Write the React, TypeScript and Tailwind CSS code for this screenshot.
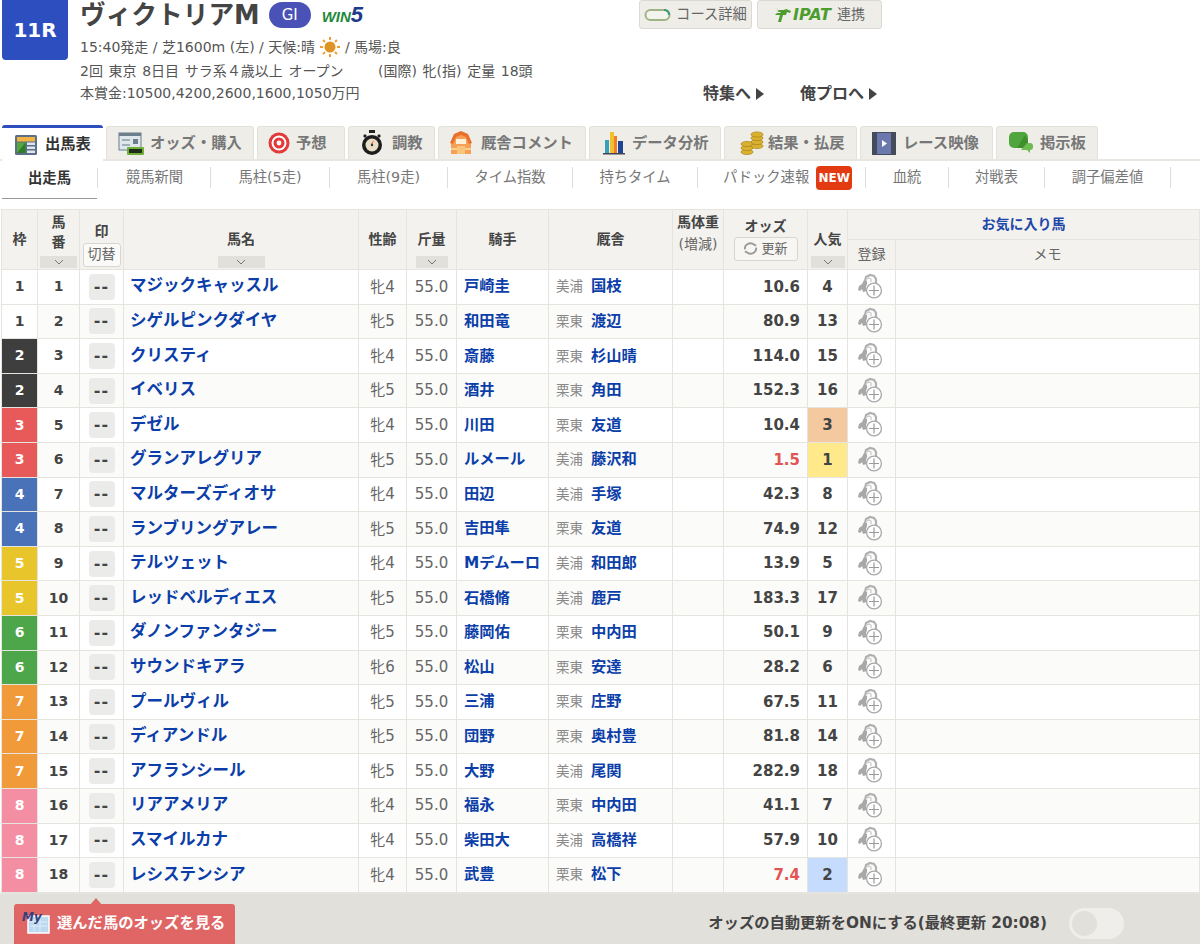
import React from "react";

type Row = [number, number, string, string, string, string, string, string, string];
const rows: Row[] = [
  [1, 1, "マジックキャッスル", "牝4", "戸崎圭", "美浦", "国枝", "10.6", "4"],
  [1, 2, "シゲルピンクダイヤ", "牝5", "和田竜", "栗東", "渡辺", "80.9", "13"],
  [2, 3, "クリスティ", "牝4", "斎藤", "栗東", "杉山晴", "114.0", "15"],
  [2, 4, "イベリス", "牝5", "酒井", "栗東", "角田", "152.3", "16"],
  [3, 5, "デゼル", "牝4", "川田", "栗東", "友道", "10.4", "3"],
  [3, 6, "グランアレグリア", "牝5", "ルメール", "美浦", "藤沢和", "1.5", "1"],
  [4, 7, "マルターズディオサ", "牝4", "田辺", "美浦", "手塚", "42.3", "8"],
  [4, 8, "ランブリングアレー", "牝5", "吉田隼", "栗東", "友道", "74.9", "12"],
  [5, 9, "テルツェット", "牝4", "Mデムーロ", "美浦", "和田郎", "13.9", "5"],
  [5, 10, "レッドベルディエス", "牝5", "石橋脩", "美浦", "鹿戸", "183.3", "17"],
  [6, 11, "ダノンファンタジー", "牝5", "藤岡佑", "栗東", "中内田", "50.1", "9"],
  [6, 12, "サウンドキアラ", "牝6", "松山", "栗東", "安達", "28.2", "6"],
  [7, 13, "プールヴィル", "牝5", "三浦", "栗東", "庄野", "67.5", "11"],
  [7, 14, "ディアンドル", "牝5", "団野", "栗東", "奥村豊", "81.8", "14"],
  [7, 15, "アフランシール", "牝5", "大野", "美浦", "尾関", "282.9", "18"],
  [8, 16, "リアアメリア", "牝4", "福永", "栗東", "中内田", "41.1", "7"],
  [8, 17, "スマイルカナ", "牝4", "柴田大", "美浦", "高橋祥", "57.9", "10"],
  [8, 18, "レシステンシア", "牝4", "武豊", "栗東", "松下", "7.4", "2"],
];

const wakuClass: Record<number, string> = {
  1: "bg-white text-[#444]",
  2: "bg-[#3e3e3e] text-white",
  3: "bg-[#e85a5a] text-white",
  4: "bg-[#4a72b8] text-white",
  5: "bg-[#e9c52c] text-white",
  6: "bg-[#4ea64a] text-white",
  7: "bg-[#f09a3a] text-white",
  8: "bg-[#f48fa3] text-white",
};

const Chev = () => (
  <svg width="10" height="6" viewBox="0 0 10 6" className="block">
    <path d="M1 1l4 4 4-4" fill="none" stroke="#777" strokeWidth="1" />
  </svg>
);

const Sort = ({ w }: { w: string }) => (
  <div className={`mx-auto flex h-[12px] items-center justify-center bg-[#e2e0da] ${w}`}>
    <Chev />
  </div>
);

const HorseAdd = () => (
  <svg width="30" height="28" viewBox="0 0 30 28" className="block">
    <path d="M1 17l1-4 3-2 2-4 3 1 0 3-1 3 1 4-4 1-1-3-2 2z" fill="#a8a8a8" />
    <path d="M8 8l1-4 4-2 4 1 2 3 0 5-2 2" fill="none" stroke="#b0b0b0" strokeWidth="2.2" />
    <path d="M10 6l2-1 2 1 0 3" fill="none" stroke="#c8c8c8" strokeWidth="1.2" />
    <circle cx="17" cy="17.5" r="7.4" fill="#fff" stroke="#a8a8a8" strokeWidth="1.3" />
    <path d="M17 12.5v10M12 17.5h10" stroke="#9a9a9a" strokeWidth="1.2" />
  </svg>
);

const tabIcons: Record<string, React.ReactNode> = {
  table: (
    <svg width="24" height="22" viewBox="0 0 24 22">
      <rect x="1" y="1" width="22" height="20" rx="1.5" fill="#5c6f86" />
      <rect x="3" y="3" width="18" height="4.5" fill="#f2b544" />
      <rect x="3" y="8.5" width="8.5" height="10.5" fill="#52a83f" />
      <path d="M3 19l8.5-10.5V19z" fill="#2f7d2c" />
      <rect x="13" y="8.5" width="8" height="2.5" fill="#dde6f1" />
      <rect x="13" y="12.5" width="8" height="2.5" fill="#dde6f1" />
      <rect x="13" y="16.5" width="8" height="2.5" fill="#dde6f1" />
    </svg>
  ),
  odds: (
    <svg width="26" height="23" viewBox="0 0 26 23">
      <rect x="1" y="1" width="22" height="17" fill="#dfe7ec" stroke="#6b7f8c" />
      <rect x="1" y="1" width="22" height="3" fill="#6b7f8c" />
      <rect x="4" y="7" width="8" height="2" fill="#9fb0ba" />
      <rect x="15" y="7" width="5" height="5" fill="#6b7f8c" />
      <rect x="4" y="12" width="8" height="2" fill="#9fb0ba" />
      <rect x="9" y="15" width="17" height="8" rx="1" fill="#6fae3a" />
      <rect x="11" y="17" width="13" height="4" fill="#1f2d16" />
    </svg>
  ),
  target: (
    <svg width="22" height="24" viewBox="0 0 22 24">
      <circle cx="11" cy="12" r="10.5" fill="#e23a3a" />
      <circle cx="11" cy="12" r="7.5" fill="#fff" />
      <circle cx="11" cy="12" r="5.5" fill="#e23a3a" />
      <circle cx="11" cy="12" r="2.4" fill="#fff" />
    </svg>
  ),
  watch: (
    <svg width="24" height="26" viewBox="0 0 24 26">
      <rect x="9" y="0" width="6" height="3" fill="#222" />
      <path d="M3 6l2-2 2 2-2 2zM21 6l-2-2-2 2 2 2z" fill="#222" />
      <circle cx="12" cy="15" r="10" fill="#1d1d1d" />
      <circle cx="12" cy="15" r="6.5" fill="#e9dfc8" />
      <path d="M12 15l2-5-3 4z" fill="#d9482c" />
      <circle cx="12" cy="15" r="1.2" fill="#333" />
    </svg>
  ),
  barn: (
    <svg width="22" height="24" viewBox="0 0 22 24">
      <path d="M1 23V11l4-7 6-3 6 3 4 7v12z" fill="#f6a056" />
      <path d="M0 12l4-9 7-3 7 3 4 9-3 1-3-7-5-2-5 2-3 7z" fill="#e8702c" />
      <rect x="6" y="8" width="10" height="5" fill="#fff1da" />
      <rect x="1" y="17" width="20" height="2" fill="#fbcf8f" />
      <rect x="7" y="15" width="8" height="8" fill="#f9c37a" />
    </svg>
  ),
  chart: (
    <svg width="22" height="24" viewBox="0 0 22 24">
      <rect x="2" y="9" width="4" height="13" fill="#3aa0b8" />
      <rect x="7" y="1" width="4" height="21" fill="#f2c12e" />
      <rect x="11" y="5" width="3" height="17" fill="#ef7f2c" />
      <rect x="15" y="10" width="5" height="12" fill="#1f4494" />
      <rect x="0" y="22" width="22" height="1.5" fill="#445" />
    </svg>
  ),
  coins: (
    <svg width="24" height="24" viewBox="0 0 24 24">
      <g fill="#d9b02f" stroke="#a98414" strokeWidth=".7">
        <ellipse cx="7" cy="21" rx="6" ry="2.6" />
        <ellipse cx="7" cy="17" rx="6" ry="2.6" />
        <ellipse cx="7" cy="13" rx="6" ry="2.6" />
        <ellipse cx="17" cy="15" rx="6" ry="2.6" />
        <ellipse cx="17" cy="11" rx="6" ry="2.6" />
        <ellipse cx="17" cy="7" rx="6" ry="2.6" />
        <ellipse cx="17" cy="3.5" rx="6" ry="2.6" />
      </g>
    </svg>
  ),
  film: (
    <svg width="24" height="23" viewBox="0 0 24 23">
      <rect x="0" y="0" width="24" height="23" fill="#444c5c" />
      <rect x="5" y="1" width="14" height="21" fill="#6a78ae" />
      <path d="M10 8l5 3.5-5 3.5z" fill="#fff" />
    </svg>
  ),
  chat: (
    <svg width="24" height="22" viewBox="0 0 24 22">
      <rect x="0" y="0" width="19" height="16" rx="5" fill="#4ea63c" />
      <path d="M8 16L16 3l3 6v2a5 5 0 01-5 5z" fill="#3f8f2f" />
      <path d="M18 11h3a3 3 0 013 3v1a3 3 0 01-3 3v3l-3-3h-6z" fill="#6cbc52" />
    </svg>
  ),
};

const tabs: [string, string, string][] = [
  ["オッズ・購入", "odds", "w-[148px] pl-[11px] gap-[6px]"],
  ["予想", "target", "w-[88px] pl-[10px] gap-[6px]"],
  ["調教", "watch", "w-[87px] pl-[11px] gap-[8px]"],
  ["厩舎コメント", "barn", "w-[148px] pl-[11px] gap-[9px]"],
  ["データ分析", "chart", "w-[132px] pl-[13px] gap-[7px]"],
  ["結果・払戻", "coins", "w-[133px] pl-[15px] gap-[4px]"],
  ["レース映像", "film", "w-[133px] pl-[11px] gap-[7px]"],
  ["掲示板", "chat", "w-[102px] pl-[12px] gap-[7px]"],
];

const subnav: [string, string][] = [
  ["競馬新聞", "w-[112px]"],
  ["馬柱(5走)", "w-[119px]"],
  ["馬柱(9走)", "w-[118px]"],
  ["タイム指数", "w-[125px]"],
  ["持ちタイム", "w-[125px]"],
];
const subnav2: [string, string][] = [
  ["血統", "w-[83px]"],
  ["対戦表", "w-[96px]"],
  ["調子偏差値", "w-[126px]"],
];

const th = "border border-[#e6e4de] bg-[#f3f2ee] font-bold text-[14px] p-0 align-middle";
const thDark = `${th} text-[#444]`;
const thLight = `${th} font-normal text-[#666]`;
const td = "border border-[#e6e4de] p-0 align-middle";

export default function App() {
  return (
    <div className="relative flex h-[944px] w-[1200px] flex-col overflow-hidden bg-white font-['DejaVu_Sans','Noto_Sans_CJK_JP',sans-serif] text-[#555]">
      {/* race header */}
      <div className="flex h-[125px] shrink-0">
        <div className="ml-[2px] flex h-[60px] w-[66px] shrink-0 items-center justify-center rounded-b-[4px] bg-[#2c4ebf] text-[20px] font-bold text-white">
          11R
        </div>
        <div className="ml-[12px] flex-1">
          <div className="flex h-[30px] items-center">
            <span className="text-[25.7px] font-bold leading-[30px] text-[#444]">ヴィクトリアM</span>
            <span className="ml-[9px] flex h-[26px] w-[42px] items-center justify-center rounded-full bg-[#4a52b8] text-[15px] text-white">
              GI
            </span>
            <span className="ml-[11px] flex items-baseline font-['Liberation_Sans',sans-serif] font-bold italic leading-none">
              <span className="text-[15px] text-[#1f8a3c]">WIN</span>
              <span className="text-[22px] text-[#1e3a8a]">5</span>
            </span>
          </div>
          <div className="mt-[5px] flex h-[24px] items-center text-[14px]">
            15:40発走 / 芝1600m (左) / 天候:晴
            <svg width="22" height="22" viewBox="0 0 22 22" className="mx-[4px]">
              <g stroke="#f0a030" strokeWidth="2">
                <path d="M11 1v3M11 18v3M1 11h3M18 11h3M4 4l2 2M16 16l2 2M4 18l2-2M16 6l2-2" />
              </g>
              <circle cx="11" cy="11" r="5.5" fill="#dd9422" />
            </svg>
            / 馬場:良
          </div>
          <div className="mt-[1px] flex h-[23px] whitespace-pre text-[14px] leading-[23px] [word-spacing:1.2px]">
            <span className="w-[298px]">2回 東京 8日目 サラ系４歳以上 オープン</span>
            <span>(国際) 牝(指) 定量 18頭</span>
          </div>
          <div className="-mt-[1px] h-[23px] text-[14px] leading-[23px]">本賞金:10500,4200,2600,1600,1050万円</div>
        </div>
        <div className="w-[561px] shrink-0">
          <div className="flex gap-[5px]">
            <div className="flex h-[29px] w-[113px] items-center justify-center gap-[4px] rounded-[3px] border border-[#dcd9d2] bg-[#eeede8] text-[14.3px] text-[#666]">
              <svg width="28" height="14" viewBox="0 0 28 14">
                <rect x="1.5" y="2" width="24" height="10" rx="5" fill="#f4f4ee" stroke="#9fb486" strokeWidth="2" />
                <path d="M20 2h1a5 5 0 014 5" fill="none" stroke="#3b9b7a" strokeWidth="2" />
              </svg>
              コース詳細
            </div>
            <div className="flex h-[29px] w-[125px] items-center justify-center gap-[6px] rounded-[3px] border border-[#dcd9d2] bg-[#eeede8] text-[14px] text-[#666]">
              <span className="flex items-center text-[16px] font-bold italic leading-none text-[#4c9c2e]">
                <svg width="18" height="15" viewBox="0 0 18 15" className="mr-[1px]">
                  <path d="M1 1l3 2h6l2-1 5 2-1 2-3-1-1 3h-3l-2 7H4l2-7H1l2-2h3l1-1H3l2-1z" fill="#4c9c2e" />
                </svg>
                IPAT
              </span>
              <span>連携</span>
            </div>
          </div>
          <div className="mt-[51px] flex pl-[64px] text-[16px] font-bold leading-[28px] text-[#444]">
            <span className="flex w-[97px] items-center">
              特集へ
              <svg width="10" height="12" viewBox="0 0 10 12" className="ml-[4px]">
                <path d="M1 0l8 6-8 6z" fill="#444" />
              </svg>
            </span>
            <span className="flex items-center">
              俺プロへ
              <svg width="10" height="12" viewBox="0 0 10 12" className="ml-[4px]">
                <path d="M1 0l8 6-8 6z" fill="#444" />
              </svg>
            </span>
          </div>
        </div>
      </div>

      {/* tabs */}
      <div className="flex h-[36px] shrink-0 items-end gap-[3px] border-b-2 border-[#e8e6e0] pl-[2px]">
        <div className="-mb-[2px] flex h-[36px] w-[101px] items-center gap-[7px] rounded-t-[3px] border-t-[3px] border-[#2c4ebf] bg-white pl-[12px] text-[15.3px] font-bold text-[#333]">
          {tabIcons.table}
          出馬表
        </div>
        {tabs.map(([label, icon, cls]) => (
          <div
            key={label}
            className={`flex h-[33px] items-center rounded-t-[3px] border border-b-0 border-[#e3e1da] bg-[#eeede8] text-[15.3px] font-bold text-[#777] ${cls}`}
          >
            {tabIcons[icon]}
            {label}
          </div>
        ))}
      </div>

      {/* sub navigation */}
      <div className="flex h-[37px] shrink-0 items-start pl-[2px] pt-[6px] text-[14.3px] text-[#777]">
        <div className="flex h-[32px] w-[95px] items-start justify-center border-b border-[#999] pt-[1px] font-bold text-[#333]">
          <span className="leading-[20px]">出走馬</span>
        </div>
        <div className="mr-[1px] mt-[1px] h-[20px] w-[1px] bg-[#ddd]" />
        {subnav.map(([t, w]) => (
          <div key={t} className={`flex h-[21px] items-center justify-center border-r border-[#ddd] ${w}`}>
            {t}
          </div>
        ))}
        <div className="flex h-[21px] w-[168px] items-center gap-[7px] border-r border-[#ddd] pl-[25px]">
          パドック速報
          <span className="flex h-[24px] w-[36px] items-center justify-center rounded-[4px] bg-[#e23b12] text-[12px] font-bold text-white">
            NEW
          </span>
        </div>
        {subnav2.map(([t, w]) => (
          <div key={t} className={`flex h-[21px] items-center justify-center border-r border-[#ddd] ${w}`}>
            {t}
          </div>
        ))}
      </div>

      {/* table */}
      <div className="mt-[11px] pl-[1px]">
        <table className="w-[1199px] table-fixed border-collapse">
          <colgroup>
            <col className="w-[36px]" />
            <col className="w-[42px]" />
            <col className="w-[44px]" />
            <col className="w-[235px]" />
            <col className="w-[48px]" />
            <col className="w-[50px]" />
            <col className="w-[92px]" />
            <col className="w-[124px]" />
            <col className="w-[51px]" />
            <col className="w-[84px]" />
            <col className="w-[40px]" />
            <col className="w-[48px]" />
            <col />
          </colgroup>
          <thead>
            <tr className="h-[30px]">
              <th rowSpan={2} className={thDark}>枠</th>
              <th rowSpan={2} className={thDark}>
                <div className="mb-[4px] leading-[20px]">馬<br />番</div>
                <Sort w="w-[37px]" />
              </th>
              <th rowSpan={2} className={thDark}>
                <div className="mb-[2px] mt-[8px] leading-[20px]">印</div>
                <div className="mx-auto flex h-[24px] w-[38px] items-center justify-center rounded-[3px] border border-[#d8d6d0] bg-[#fafaf8] text-[14px] font-normal text-[#666]">
                  切替
                </div>
              </th>
              <th rowSpan={2} className={thDark}>
                <div className="mb-[5px] mt-[15px] leading-[24px]">馬名</div>
                <Sort w="w-[47px]" />
              </th>
              <th rowSpan={2} className={thDark}>性齢</th>
              <th rowSpan={2} className={thDark}>
                <div className="mb-[5px] mt-[15px] leading-[24px]">斤量</div>
                <Sort w="w-[32px]" />
              </th>
              <th rowSpan={2} className={thDark}>騎手</th>
              <th rowSpan={2} className={thDark}>厩舎</th>
              <th rowSpan={2} className={`${thDark} align-top`}>
                <div className="leading-[24px]">馬体重</div>
                <div className="font-normal leading-[20px] text-[#666]">(増減)</div>
              </th>
              <th rowSpan={2} className={thDark}>
                <div className="-mt-[4px] leading-[22px]">オッズ</div>
                <div className="mx-auto flex h-[24px] w-[64px] items-center justify-center gap-[3px] rounded-[3px] border border-[#d8d6d0] bg-[#f7f6f3] text-[13px] font-normal text-[#666]">
                  <svg width="15" height="15" viewBox="0 0 16 16">
                    <path d="M2 9a6 6 0 0110-5l2 1M14 7a6 6 0 01-10 5l-2-1" fill="none" stroke="#999" strokeWidth="2" />
                  </svg>
                  更新
                </div>
              </th>
              <th rowSpan={2} className={thDark}>
                <div className="mb-[5px] mt-[15px] leading-[24px]">人気</div>
                <Sort w="w-[34px]" />
              </th>
              <th colSpan={2} className={`${th} text-[#1e48a8]`}>お気に入り馬</th>
            </tr>
            <tr className="h-[30px]">
              <th className={thLight}>登録</th>
              <th className={thLight}>メモ</th>
            </tr>
          </thead>
          <tbody>
            {rows.map((r, i) => (
              <tr key={r[1]} className={`h-[34.6px] ${i % 2 ? "bg-[#fbfbfa]" : "bg-white"}`}>
                <td className={`${td} text-center text-[14px] font-bold ${wakuClass[r[0]]}`}>{r[0]}</td>
                <td className={`${td} text-center text-[14px] font-bold text-[#444]`}>{r[1]}</td>
                <td className={td}>
                  <div className="mx-auto flex h-[26px] w-[26px] items-center justify-center rounded-[4px] bg-[#ebebe9] text-[16px] font-bold tracking-[1px] text-[#444]">
                    --
                  </div>
                </td>
                <td className={`${td} whitespace-nowrap pl-[6px] text-[16.5px] font-bold text-[#0b3ea8]`}>{r[2]}</td>
                <td className={`${td} text-center text-[15px] text-[#666]`}>{r[3]}</td>
                <td className={`${td} text-center text-[15px] text-[#666]`}>55.0</td>
                <td className={`${td} whitespace-nowrap pl-[7px] text-[15.3px] font-bold text-[#0b3ea8]`}>{r[4]}</td>
                <td className={`${td} pl-[7px] text-[13.5px] text-[#888]`}>
                  {r[5]}
                  <span className="ml-[8px] text-[15.3px] font-bold text-[#0b3ea8]">{r[6]}</span>
                </td>
                <td className={td} />
                <td
                  className={`${td} pr-[7px] text-right text-[15px] font-bold ${
                    parseFloat(r[7]) < 10 ? "text-[#e25555]" : "text-[#444]"
                  }`}
                >
                  {r[7]}
                </td>
                <td
                  className={`${td} text-center text-[15px] font-bold text-[#444] ${
                    r[8] === "1" ? "bg-[#ffe98a]" : r[8] === "2" ? "bg-[#c6dcff]" : r[8] === "3" ? "bg-[#f4c9a0]" : ""
                  }`}
                >
                  {r[8]}
                </td>
                <td className={td}>
                  <div className="flex justify-center">
                    <HorseAdd />
                  </div>
                </td>
                <td className={td} />
              </tr>
            ))}
          </tbody>
        </table>
      </div>

      {/* bottom bar */}
      <div className="relative flex flex-1 items-start justify-between border-t border-[#e6e4de] bg-[#e2e0da] pl-[14px]">
        <div className="absolute left-[90px] top-[4px] h-0 w-0 border-x-[6px] border-b-[7px] border-x-transparent border-b-[#e06666]" />
        <div className="mt-[10px] flex h-[42px] w-[221px] items-center gap-[6px] rounded-[3px] border-b-2 border-[#c94a4a] bg-[#e06666] pl-[8px] text-[15.3px] font-bold text-white">
          <svg width="29" height="26" viewBox="0 0 29 26">
            <rect x="6" y="5" width="21" height="17" fill="#bcd9f0" stroke="#fff" strokeWidth="1.5" />
            <path d="M12 8v12M18 8v12M8 11h17M8 15h17" stroke="#e6f1fa" strokeWidth=".8" />
            <text x="0" y="10" fontSize="12" fontWeight="700" fontStyle="italic" fill="#3a3f7a">My</text>
          </svg>
          選んだ馬のオッズを見る
        </div>
        <div className="mr-[76px] mt-[14px] flex items-center">
          <span className="text-[15.3px] font-bold text-[#444]">オッズの自動更新をONにする(最終更新 20:08)</span>
          <span className="ml-[22px] flex h-[31px] w-[55px] items-center rounded-full bg-[#efeeea] pl-[3px]">
            <span className="h-[25px] w-[25px] rounded-full bg-[#e2e0da]" />
          </span>
        </div>
      </div>
    </div>
  );
}
